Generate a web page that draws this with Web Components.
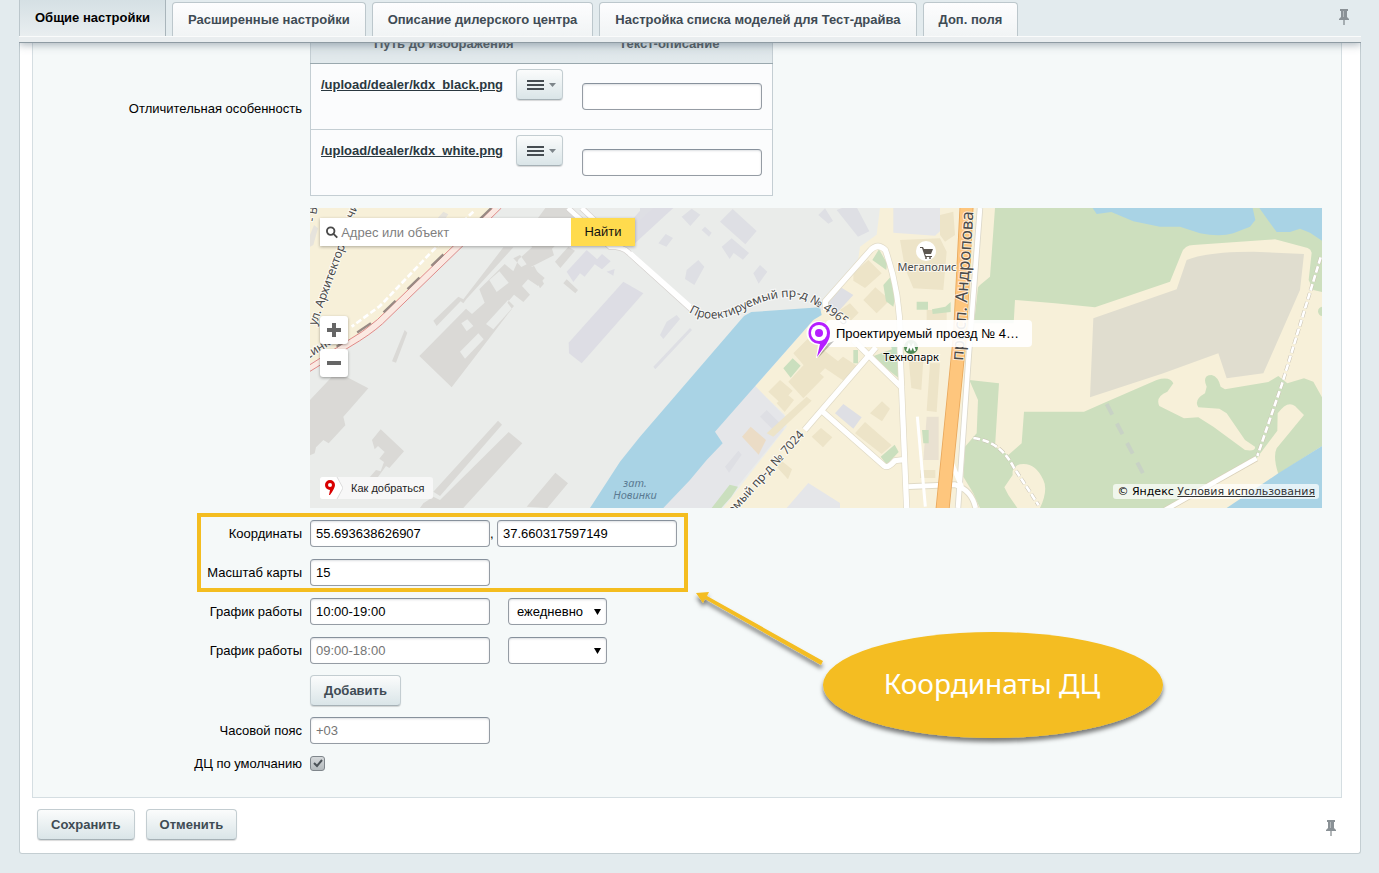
<!DOCTYPE html>
<html lang="ru">
<head>
<meta charset="utf-8">
<title>Настройки дилерского центра</title>
<style>
    body {
        margin: 0;
        padding: 0 18px 19px 19px;
        background: #e3ebee;
        color: #000;
        font: 13px/16px "Liberation Sans", Arial, sans-serif;
    }
</style>
</head>
<body>

<settings-tabs>
    <settings-tab active>Общие настройки</settings-tab>
    <settings-tab>Расширенные настройки</settings-tab>
    <settings-tab>Описание дилерского центра</settings-tab>
    <settings-tab>Настройка списка моделей для Тест-драйва</settings-tab>
    <settings-tab>Доп. поля</settings-tab>
</settings-tabs>

<settings-panel>
    <form-row label="Отличительная особенность" class="files">
        <file-table></file-table>
    </form-row>
    <form-row>
        <dealer-map></dealer-map>
    </form-row>
    <marked-group note="Координаты ДЦ">
        <text-row label="Координаты" value="55.693638626907" second="37.660317597149"></text-row>
        <text-row label="Масштаб карты" value="15"></text-row>
    </marked-group>
    <text-row label="График работы" value="10:00-19:00" days="ежедневно"></text-row>
    <text-row label="График работы" placeholder="09:00-18:00" days=""></text-row>
    <form-row>
        <push-button>Добавить</push-button>
    </form-row>
    <text-row label="Часовой пояс" placeholder="+03"></text-row>
    <check-row label="ДЦ по умолчанию"></check-row>
    <push-button slot="buttons">Сохранить</push-button>
    <push-button slot="buttons">Отменить</push-button>
</settings-panel>

<script>
// общие стили полей
const fieldCss = `
    * { box-sizing: border-box; }
    input, select {
        height: 27px;
        margin: 0;
        border: 1px solid #959ca4;
        border-top-color: #87919c;
        border-radius: 4px;
        background: #fff;
        color: #000;
        font: inherit;
        box-shadow: inset 0 1px 2px rgba(140, 150, 160, 0.3);
    }
    input::placeholder { color: #757575; opacity: 1; }
    input[type=text] { width: 180px; padding: 0 5px; }
`;

const rowCss = `
    :host {
        display: grid;
        grid-template-columns: 269px minmax(0, 1fr);
        column-gap: 8px;
        align-items: center;
    }
    label, .label { text-align: right; }
`;

class PinIcon extends HTMLElement {
    connectedCallback() {
        const shadow = this.attachShadow({ mode: 'open' });
        shadow.innerHTML = `
        <style>
            :host { display: block; width: 10px; height: 17px; }
            button { display: block; padding: 0; border: 0; background: none; cursor: pointer; }
            svg { display: block; }
        </style>
        <button aria-label="Закрепить">
            <svg width="10" height="17" viewBox="0 0 10 17">
                <path d="M1 0h8v2H8v6l2 2v1H0v-1l2-2V2H1z" fill="#8a9196"/>
                <path d="M4 2h1v6H4z" fill="#b5babd"/>
                <path d="M4.500 11h1v5h-1z" fill="#697075"/>
            </svg>
        </button>`;
    }
}

class SettingsTabs extends HTMLElement {
    connectedCallback() {
        const shadow = this.attachShadow({ mode: 'open' });
        shadow.innerHTML = `
        <style>
            :host {
                display: block;
                position: relative;
                z-index: 2;
                border-bottom: 1px solid #8e9ba3;
                box-shadow: 0 2px 8px rgba(80, 100, 115, 0.45);
                clip-path: inset(0 0 -14px 0);
            }
            nav { display: flex; gap: 6px; height: 36px; padding-right: 12px; background: #e3ebee; }
            .strip { height: 6px; box-sizing: border-box; border-top: 1px solid #fafbfb; background: #e9edef; }
            pin-icon { margin: 9px 0 0 auto; }
        </style>
        <nav><slot></slot><pin-icon></pin-icon></nav>
        <div class="strip"></div>`;
    }
}

class SettingsTab extends HTMLElement {
    connectedCallback() {
        const shadow = this.attachShadow({ mode: 'open' });
        shadow.innerHTML = `
        <style>
            :host { display: flex; padding-top: 2px; }
            a {
                box-sizing: border-box;
                height: 34px;
                padding: 9px 15px 0;
                border: 1px solid #bcc7cc;
                border-bottom: 0;
                border-radius: 4px 4px 0 0;
                background: linear-gradient(#fdfdfe, #f1f4f5);
                color: #3f4b54;
                font-weight: bold;
                text-decoration: none;
                white-space: nowrap;
            }
            :host([active]) { padding-top: 0; }
            :host([active]) a {
                height: 36px;
                padding-top: 10px;
                border-width: 0 1px;
                border-right-color: #a9b5bb;
                border-radius: 0;
                background: linear-gradient(#d5e0e4, #e9eef0);
                color: #000;
            }
        </style>
        <a href="#"><slot></slot></a>`;
    }
}

class SettingsPanel extends HTMLElement {
    connectedCallback() {
        const shadow = this.attachShadow({ mode: 'open' });
        shadow.innerHTML = `
        <style>
            :host {
                display: block;
                overflow: hidden;
                border: 1px solid #c4ced2;
                border-top: 0;
                border-radius: 0 0 3px 3px;
                background: #fff;
            }
            .body {
                display: flow-root;
                margin: 0 18px 0 12px;
                padding: 0 19px 25px 0;
                border: 1px solid #d5dee2;
                border-top: 0;
                background: #f5f9f9;
            }
            .rows { display: flex; flex-direction: column; gap: 12px; }
            /* первая строка прокручена под панель вкладок */
            ::slotted(.files) { margin-top: -22px; }
            .footer {
                display: flex;
                align-items: center;
                gap: 11px;
                padding: 12px 24px 14px 17px;
            }
            pin-icon { margin-left: auto; padding-top: 7px; }
        </style>
        <div class="body"><div class="rows"><slot></slot></div></div>
        <div class="footer"><slot name="buttons"></slot><pin-icon></pin-icon></div>`;
    }
}

class PushButton extends HTMLElement {
    connectedCallback() {
        const shadow = this.attachShadow({ mode: 'open' });
        shadow.innerHTML = `
        <style>
            :host { display: flex; width: max-content; margin: -1px 0; }
            button {
                display: flex;
                align-items: center;
                gap: 5px;
                height: 31px;
                padding: 0 13px;
                border: 1px solid #c3cdd1;
                border-bottom-color: #a6b1b6;
                border-radius: 4px;
                background: linear-gradient(#fbfcfc, #dae5e8);
                box-shadow: 0 1px 1px rgba(0, 0, 0, 0.15);
                color: #3f4b54;
                font: inherit;
                font-weight: bold;
            }
            :host([compact]) button { padding: 0 6px 0 10px; }
        </style>
        <button type="button"><slot></slot></button>`;
        if (this.hasAttribute('compact')) {
            shadow.querySelector('button').setAttribute('aria-label', 'Меню');
        }
    }
}

// строка с произвольным содержимым
class FormRow extends HTMLElement {
    connectedCallback() {
        const shadow = this.attachShadow({ mode: 'open' });
        shadow.innerHTML = `
        <style>${rowCss}</style>
        <span class="label">${this.getAttribute('label') || ''}</span>
        <div><slot></slot></div>`;
    }
}

class TextRow extends HTMLElement {
    connectedCallback() {
        const shadow = this.attachShadow({ mode: 'open' });
        const label = this.getAttribute('label');
        const second = this.getAttribute('second');
        const days = this.getAttribute('days');

        let extra = '';
        if (second !== null) {
            extra = `<span class="comma">,</span><input type="text" value="${second}" aria-label="Долгота">`;
        }
        if (days !== null) {
            extra = `
            <span class="select">
                <select aria-label="Дни работы"><option>${days}</option></select>
                <svg width="7" height="6" viewBox="0 0 7 6"><path d="M0 0h7L3.500 6z"/></svg>
            </span>`;
        }

        shadow.innerHTML = `
        <style>
            ${rowCss}
            ${fieldCss}
            .fields { display: flex; align-items: center; }
            .comma { width: 7px; }
            .select { display: grid; align-items: center; margin-left: 18px; }
            .select > * { grid-area: 1 / 1; }
            select { width: 99px; padding: 0 8px; appearance: none; }
            svg { justify-self: end; margin-right: 6px; pointer-events: none; }
        </style>
        <label for="field">${label}</label>
        <div class="fields">
            <input type="text" id="field" value="${this.getAttribute('value') || ''}"
                placeholder="${this.getAttribute('placeholder') || ''}">${extra}
        </div>`;
    }
}

class CheckRow extends HTMLElement {
    connectedCallback() {
        const shadow = this.attachShadow({ mode: 'open' });
        shadow.innerHTML = `
        <style>
            ${rowCss}
            .box { display: grid; width: 15px; height: 16px; }
            .box > * { grid-area: 1 / 1; }
            input {
                appearance: none;
                width: 15px;
                height: 15px;
                margin: 0;
                border: 1px solid #7f868b;
                border-radius: 3px;
                background: linear-gradient(#d5d9db, #b4babd);
            }
            svg { display: none; pointer-events: none; }
            input:checked + svg { display: block; }
        </style>
        <label for="check">${this.getAttribute('label')}</label>
        <div class="box">
            <input type="checkbox" id="check" checked>
            <svg width="15" height="15" viewBox="0 0 15 15">
                <path d="M4 7l3 3 5-6" fill="none" stroke="#4b5257" stroke-width="2"/>
            </svg>
        </div>`;
    }
}

class FileTable extends HTMLElement {
    connectedCallback() {
        const shadow = this.attachShadow({ mode: 'open' });
        const files = ['/upload/dealer/kdx_black.png', '/upload/dealer/kdx_white.png'];

        let rows = '';
        files.forEach(file => {
            rows += `
            <tr>
                <td>
                    <div class="file">
                        <a href="#">${file}</a>
                        <push-button compact>
                            <svg width="17" height="10" viewBox="0 0 17 10"><path d="M0 0h17v2H0zM0 4h17v2H0zM0 8h17v2H0z" fill="#454c51"/></svg>
                            <svg width="7" height="4" viewBox="0 0 7 4"><path d="M0 0h7L3.500 4z" fill="#7d858a"/></svg>
                        </push-button>
                    </div>
                </td>
                <td><input type="text" aria-label="Текст-описание"></td>
            </tr>`;
        });

        shadow.innerHTML = `
        <style>
            ${fieldCss}
            :host { display: block; }
            table {
                width: 463px;
                border: 1px solid #c4ced3;
                border-collapse: collapse;
                background: #fbfcfd;
            }
            th {
                height: 42px;
                padding: 2px 0 0;
                border-bottom: 1px solid #9aa8ae;
                background: linear-gradient(#cfdade, #e3eaed);
                color: #525b62;
            }
            th:first-child { width: 266px; }
            th:last-child { padding-right: 10px; }
            td { height: 66px; padding: 0; border-bottom: 1px solid #c4ced3; }
            td:last-child { padding: 0 0 0 5px; }
            .file { display: flex; align-items: center; justify-content: space-between; margin: -24px 14px 0 10px; }
            a { color: #2a3840; font-weight: bold; }
        </style>
        <table>
            <thead><tr><th>Путь до изображения</th><th>Текст-описание</th></tr></thead>
            <tbody>${rows}</tbody>
        </table>`;
    }
}

// группа строк, обведённая рамкой, с выноской справа
class MarkedGroup extends HTMLElement {
    connectedCallback() {
        const shadow = this.attachShadow({ mode: 'open' });
        shadow.innerHTML = `
        <style>
            :host { display: flex; flex-direction: column; gap: 12px; position: relative; }
            .frame {
                position: absolute;
                top: -7px;
                left: 164px;
                width: 491px;
                height: 79px;
                box-sizing: border-box;
                border: 4px solid #f4bd20;
                pointer-events: none;
            }
            svg { position: absolute; top: 68px; left: 658px; z-index: 1; pointer-events: none; }
            text { font: 28px "Noto Sans", sans-serif; fill: #fff; }
        </style>
        <slot></slot>
        <div class="frame"></div>
        <svg width="490" height="170" viewBox="0 0 490 170">
            <defs>
                <filter id="shade" x="-10%" y="-20%" width="120%" height="150%">
                    <feDropShadow dx="0" dy="4" stdDeviation="2" flood-color="#000" flood-opacity="0.5"/>
                </filter>
            </defs>
            <g fill="#f4bd20" filter="url(#shade)">
                <path d="M5 5l13-1-2 4L132 73l-2 4L14 11l-2 4z"/>
                <ellipse cx="302" cy="97" rx="170" ry="53"/>
            </g>
            <text x="301" y="106" text-anchor="middle">${this.getAttribute('note')}</text>
        </svg>`;
    }
}

class DealerMap extends HTMLElement {
    connectedCallback() {
        const shadow = this.attachShadow({ mode: 'open' });
        shadow.innerHTML = `
        <style>
            :host {
                display: grid;
                height: 300px;
                overflow: hidden;
                background: #eaecea;
            }
            :host > * { grid-area: 1 / 1; }
            .layer { grid-area: 1 / 1; width: 100%; height: 300px; }
            .names { font: 12px "Noto Sans", sans-serif; fill: #4a4a4a; }
            .names text { paint-order: stroke; stroke: rgba(255, 255, 255, 0.7); stroke-width: 2px; }
            .controls {
                grid-area: 1 / 1;
                position: relative;
                display: flex;
                flex-direction: column;
                align-items: flex-start;
                padding: 10px 3px 9px 10px;
            }
            form { display: flex; width: 315px; margin: 0; background: #fff; box-shadow: 0 1px 3px rgba(0, 0, 0, 0.3); }
            form label { display: flex; flex: 1; align-items: center; gap: 3px; padding-left: 6px; }
            form input { width: 100%; height: 28px; padding: 0; border: 0; outline: 0; font: inherit; color: #000; }
            form input::placeholder { color: #808080; opacity: 1; }
            form button { width: 64px; padding: 0; border: 0; background: #ffdb4d; font: inherit; color: #111; }
            .zoom { display: flex; flex-direction: column; gap: 5px; margin-top: 70px; }
            .zoom button {
                width: 28px;
                height: 28px;
                padding: 7px;
                border: 0;
                border-radius: 3px;
                background: #fff;
                box-shadow: 0 1px 3px rgba(0, 0, 0, 0.35);
            }
            .zoom svg, .route svg { display: block; }
            .bottom {
                display: flex;
                align-self: stretch;
                align-items: flex-end;
                justify-content: space-between;
                margin-top: auto;
                font-size: 11px;
            }
            .route {
                display: flex;
                align-items: center;
                gap: 8px;
                height: 22px;
                padding: 0 9px 0 0;
                border: 0;
                border-radius: 3px;
                background: #f7f7f7;
                font: inherit;
                color: #222;
            }
            .copy {
                padding: 0 4px;
                border-radius: 3px;
                background: rgba(255, 255, 255, 0.7);
                color: #000;
                font: 11px/15px "DejaVu Sans", Verdana, sans-serif;
            }
            .copy a { color: #333; }
            .mark { position: absolute; top: 112px; left: 496px; display: flex; align-items: flex-start; }
            .mark span {
                width: 186px;
                margin-left: -8px;
                padding: 0 10px;
                border-radius: 4px;
                background: rgba(255, 255, 255, 0.9);
                line-height: 27px;
                white-space: nowrap;
            }
            .mark svg { position: relative; z-index: 1; }
        </style>

        <svg class="layer" viewBox="0 0 3036 900" preserveAspectRatio="xMidYMid slice">
            <rect width="3036" height="900" fill="#eaecea"/>

            <g transform="translate(-30 -24)">
                <path fill="#f7f0d9" d="M30 24H570L470 130 300 300 160 420 30 490z"/>
                <path fill="#e6e3dc" d="M30 105l12-30 12 10-14 50-10 5zM390 80l40-45 15 8-25 37z"/>
                <g fill="#dad9d6">
                    <path d="M400 362l75-72 15 8L610 142h30L500 296l-10 14-8-6-72 74z"/>
                    <path fill-rule="evenodd" d="M358 468L498 326l18 16 38-34-16-40 76-76 26 22 16-36 40-36-20-36 60-82h70l36 36-50 20 8 22-44 44 6 20-68 34 40 34-20 24-30-20-18 20 24 26-20 22-28-22-20 24 14 18L455 562zM480 455l55-55 16 18-56 58zM558 372l66-72 18 18-62 70zM568 240l30-26 28 34-36 28zM484 370l18-12 18 20-20 16zM640 175l20-10 20 28-16 8z"/>
                    <path d="M690 205l12-8 30 54-12 14zM276 484l38-94 8 8-34 90z"/>
                    <path d="M30 600l80-85 95 50-75 85 6 26-50 54-16-10-22 22-4 18-14 6z"/>
                    <path d="M216 720l26-32 70 66-44 50-10-6-72 98-6-14-22 8 70-80 14 4 10-28-14-10 16-20-20-18-10 10z"/>
                    <path d="M400 875L594 662l12 12L420 888zM370 910l30-20 20 10L626 696l41 34L490 924H360zM680 920l86-102 38 32-62 74z"/>
                    <path d="M765 185l40-45 20 12-44 52zM790 250l10-12 34 32-8 10z"/>
                </g>
                <g fill="#dddde4">
                    <path d="M806 428l164-183 60 35-185 210-38-30z"/>
                    <path d="M800 215l60-65 34 30-40 50-14-10-20 26zM880 190l26-28 26 22-26 24zM920 215l24-8-4 20zM960 100l80-90 80 14-120 110z"/>
                </g>
                <path fill="none" stroke="#fff" stroke-width="8" stroke-dasharray="18 8" d="M520 35L400 150 240 318 155 380"/>
                <path fill="none" stroke="#fbe9e2" stroke-width="20" d="M590 24L470 140 240 365Q200 400 145 432L30 504"/>
                <path fill="none" stroke="#e08a88" stroke-width="3" d="M578 24L462 136 232 359Q190 396 140 424L30 494M604 24L480 146 248 371Q210 405 150 440L30 514"/>
                <path fill="none" stroke="#988a84" stroke-width="7" stroke-dasharray="50 50" d="M574 24L458 136 228 359 110 440"/>
                <path fill="none" stroke="#d6d2cf" stroke-width="18" d="M804 24L930 140q40 0 56 18l190 172M845 24l100 95"/>
                <path fill="none" stroke="#fff" stroke-width="14" d="M804 24L930 140q40 0 56 18l190 172M845 24l100 95"/>
            </g>

            <g transform="translate(990 -24)">
                <path fill="#f7f0d9" d="M720 24l-10 80-50 36-5 35-100 145-210 240 90 85 5 35L300 860l-50 64H2100V24z"/>
                <path fill="#e5e6e9" d="M225 695l118-140 92 95-5 40-130 160-70 74H60zM760 24h140v70l-15 13-125-9zM440 924l65-75 95 60v15z"/>
                <path fill="#a9d3e5" d="M0 710L312 348l22-12 206-14 5 23-25 15-295 335 23 35-48 50-50 60-80 84h-220l90-139z"/>
                <g fill="#dedfe4">
                    <path d="M240 65l38-38 72 66-34 40zM590 30l54-20 44 84-34 16zM245 140l30-25 52 44-18 20-28-20-12 18zM140 210l35-30 18 20-30 55-28-18zM340 220l20-25 22 20-26 36zM185 90l10-10 20 18-8 12zM55 130l22-28 22 12-20 26zM125 50l30-24 26 18-30 34zM535 45l20-20 24 38-14 8zM0 60V24h40zM40 500L150 384l6 6L46 508z"/>
                    <path d="M80 365l30-20 10 12-50 60-10-12zM550 310l50-50 40 25-50 55-20-10zM585 640l25-28 55 40-25 34zM360 650l20-20 40 40-20 20zM255 800l40-48 10 12-38 54z"/>
                </g>
                <g fill="#ede4c8">
                    <path d="M640 220l45-40 40 40-50 44-35-22zM670 300l36-38 44 38-40 40zM600 330l30-20 26 28-24 24zM460 460l45-45 130 100-20 30-60-40-30 30zM445 545l55-60 52 46-62 64zM385 575l35-35 38 32-36 38zM410 610l28-30 24 20-28 36zM575 500l34-30 46 30-24 38zM780 120l120-5 20 40-10 115-90-5-25-60zM900 45l40-10 5 70-30 20-15-20zM805 470l45 10-6 90-30-6zM870 490h30l-10 146-30-4zM690 640l36-36 24 22-24 38zM515 710l28-26 34 28-28 30zM645 700l30-34 80 70-30 26zM410 800l16-16 30 24-12 30zM380 700l120-110 15 12-115 108zM860 330h60v60h-60zM840 810h46v24h-46z"/>
                    <path fill="#ebdcc6" d="M306 710l26-30 46 40-22 44z"/>
                    <path fill="#e9e1d1" d="M860 650h36v130h-46z"/>
                </g>
                <g fill="#cadfbe">
                    <path d="M697 180l20-32 24 42-2 20zM730 255l22-25 14 60-6 30-22-16zM695 470l95-35v110zM640 450h14v40h-14zM430 505l28-30 24 22-30 36zM722 770l42-36 12 22-36 38zM215 924l54-70 25 6-20 30-30 34zM830 305h34v24h-34zM876 328l40-8 16-14v30l-54 6zM846 690h20v40h-16z"/>
                </g>
                <path fill="#c2e0c4" d="M750 430h30v90z"/>
                <path fill="none" stroke="#e0dac6" stroke-width="20" d="M556 330v-26L692 150q22-22 44 0 50 140 44 300l20 474M640 420l50 50 98 95M708 442L494 690M545 632l188 166q10 8 32-16l30-4M805 860l140-6q50 16 62 70"/>
                <path fill="none" stroke="#fff" stroke-width="16" d="M556 330v-26L692 150q22-22 44 0 50 140 44 300l20 474M640 420l50 50 98 95M708 442L494 690M545 632l188 166q10 8 32-16l30-4M-30 160L150 320"/>
                <path fill="none" stroke="#fff" stroke-width="9" d="M832 650l24 270"/>
            </g>

            <g transform="translate(2010 -24)">
                <path fill="#cddfbe" d="M45 24H1026V276L1000 270 986 240 995 158Q993 148 983 144L885 118 640 135Q614 135 605 159L570 245 345 322 225 310 105 300 101 370H-18L-6 262 0 255 30 230z"/>
                <path fill="#a9d3e5" d="M338 24l12 18 44-6 66 28 80 16h60l60 20q60 12 100 0l50-20 16-20-8-36zM838 24l24 34 28 38h40l30-10 30 12 36 24V24z"/>
                <path fill="#e0ddcf" d="M340 355L590 268 620 180Q680 155 820 155L972 162 960 270 850 520 740 535 715 460 550 520 330 592z"/>
                <path fill="#cddfbe" d="M-32 540L57 550 45 740 85 765 125 730 132 635H312L380 605 530 540Q570 528 580 550L562 575Q525 590 538 618L612 655 655 652 700 680 795 750Q828 755 825 740L795 720 740 640 718 626 655 622Q640 600 675 580L680 560Q665 525 695 525 715 530 722 560L735 568 865 546 895 528 922 550 972 535 1000 545 1026 592V738L895 822Q878 770 890 745L972 645 945 618Q922 600 893 640L892 692 830 775 560 924H180Q205 870 190 840 165 785 120 793 95 800 98 825L73 862 85 885 112 924H0L-20 880-50 830-45 740-10 700-6 600z"/>
                <path fill="#a9d3e5" d="M1026 738L895 820 740 924H1026z"/>
                <path fill="none" stroke="#c8d2c5" stroke-width="12" stroke-dasharray="36 30" d="M380 612l110 210"/>
                <path fill="none" stroke="#d8cfb8" stroke-width="18" d="M830 775L555 930"/>
                <path fill="none" stroke="#fff" stroke-width="14" d="M830 775L555 930"/>
                <path fill="none" stroke="#c9c2b2" stroke-width="11" stroke-dasharray="20 8" d="M1022 172L905 555 832 768M-20 714Q60 724 100 800L176 916"/>
                <path fill="none" stroke="#fff" stroke-width="8" stroke-dasharray="20 8" d="M1022 172L905 555 832 768M-20 714Q60 724 100 800L176 916"/>
                <circle cx="1028" cy="334" r="14" fill="#cddfbe"/>
            </g>

            <g fill="none" transform="translate(990 -24)">
                <path stroke="#dcd8ca" stroke-width="19" d="M1020 24L986 470 954 924"/>
                <path stroke="#fff" stroke-width="14" d="M1020 24L986 470 954 924M805 860l140-6q50 16 62 70M935 790l30 70"/>
                <path stroke="#e9a85c" stroke-width="42" d="M980 14L960 404 907 934"/>
                <path stroke="#fec67d" stroke-width="37" d="M980 14L960 404 907 934"/>
            </g>
        </svg>

        <svg class="layer names" viewBox="0 0 1012 300" preserveAspectRatio="xMidYMid slice">
            <defs>
                <path id="street" d="M379 104Q394 114 417 109 430 104 440 99 463 88 487 89 503 93 535 118"/>
            </defs>
            <text><textPath href="#street">Проектируемый пр-д № 4965</textPath></text>
            <text transform="translate(419 311) rotate(-48)">уемый пр-д № 7024</text>
            <text transform="translate(653 153) rotate(-86)" font-size="17">просп. Андропова</text>
            <text transform="translate(6 118) rotate(-70)">ул. Архитектора</text>
            <text transform="translate(43 11) rotate(-68)">чи</text>
            <text transform="translate(5 14) rotate(-80)">- Ве</text>
            <text transform="translate(-2 151) rotate(-32)">синка</text>
            <circle cx="616" cy="43" r="10" fill="#fff"/>
            <path fill="#5c5650" d="M610 39h3l1 2h9l-2 5h-6l1 2h6v1h-7l-3-9h-2z"/>
            <circle cx="616" cy="50" r="1" fill="#5c5650"/>
            <circle cx="620" cy="50" r="1" fill="#5c5650"/>
            <text x="617" y="63" text-anchor="middle" font-size="11">Мегаполис</text>
            <circle cx="601" cy="139" r="7" fill="#4f8a55"/>
            <path fill="none" stroke="#fff" stroke-width="2" d="M597 143l2-6 2 4 2-4 2 6"/>
            <text x="601" y="153" text-anchor="middle" font-size="11" fill="#000">Технопарк</text>
            <g font-size="11" font-style="italic" fill="#5b7b93" text-anchor="middle">
                <text x="325" y="279" style="stroke: none">зат.</text>
                <text x="325" y="291" style="stroke: none">Новинки</text>
            </g>
        </svg>

        <div class="controls">
            <form>
                <label>
                    <svg width="13" height="13" viewBox="0 0 13 13"><circle cx="5" cy="5" r="4" fill="none" stroke="#4a4a4a" stroke-width="2"/><path d="M8 8l4 4" stroke="#4a4a4a" stroke-width="2"/></svg>
                    <input type="text" placeholder="Адрес или объект" aria-label="Адрес или объект">
                </label>
                <button type="button">Найти</button>
            </form>
            <div class="zoom">
                <button aria-label="Приблизить"><svg width="14" height="14" viewBox="0 0 14 14"><path d="M5 0h4v5h5v4H9v5H5V9H0V5h5z" fill="#666"/></svg></button>
                <button aria-label="Отдалить"><svg width="14" height="14" viewBox="0 0 14 14"><path d="M0 5h14v4H0z" fill="#666"/></svg></button>
            </div>
            <div class="bottom">
                <button class="route">
                    <svg width="23" height="22" viewBox="0 0 23 22">
                        <path d="M3 0h14l6 11-6 11H3q-3 0-3-3V3q0-3 3-3z" fill="#fff"/>
                        <path d="M17 0l6 11-6 11" fill="none" stroke="#dcdcdc"/>
                        <path fill="#d90000" fill-rule="evenodd" d="M10 3a5 5 0 0 1 5 5q0 3-5 10H9l1-5a5 5 0 0 1 0-10zm0 3a2 2 0 1 0 0 4 2 2 0 0 0 0-4z"/>
                    </svg>
                    Как добраться
                </button>
                <div class="copy">© Яндекс <a href="#">Условия использования</a></div>
            </div>
            <div class="mark">
                <svg width="28" height="40" viewBox="0 0 28 40">
                    <path d="M12 38L28 21 20 24z" fill="#000" opacity="0.25"/>
                    <path d="M13 1a12 12 0 0 1 12 12q0 8-7 16l-7 9h-1l2-13A12 12 0 0 1 13 1z" fill="#fff"/>
                    <path d="M13 2a11 11 0 0 1 11 11q0 7-6 14l-7 10 3-13A11 11 0 1 1 13 2z" fill="#b51eff"/>
                    <circle cx="13" cy="13" r="8" fill="#fff"/>
                    <circle cx="13" cy="13" r="4" fill="#b51eff"/>
                </svg>
                <span>Проектируемый проезд № 4…</span>
            </div>
        </div>`;
    }
}

customElements.define('pin-icon', PinIcon);
customElements.define('settings-tabs', SettingsTabs);
customElements.define('settings-tab', SettingsTab);
customElements.define('settings-panel', SettingsPanel);
customElements.define('push-button', PushButton);
customElements.define('form-row', FormRow);
customElements.define('text-row', TextRow);
customElements.define('check-row', CheckRow);
customElements.define('file-table', FileTable);
customElements.define('marked-group', MarkedGroup);
customElements.define('dealer-map', DealerMap);
</script>
</body>
</html>
